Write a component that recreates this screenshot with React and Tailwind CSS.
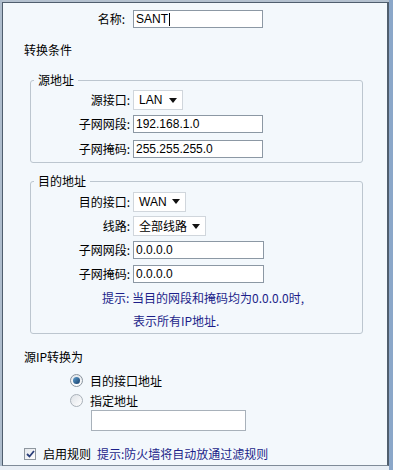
const cjk = { fontFamily: '"Noto Sans CJK SC", "Liberation Sans", sans-serif' };
const latin = { fontFamily: '"Liberation Sans", "Noto Sans CJK SC", sans-serif' };

function TextBox({ value, width, caret }) {
  return (
    <div
      className="ml-[3px] h-[18px] border border-[#8c98a4] bg-white flex items-center pl-[2px] text-[12px] text-black"
      style={{ ...latin, width }}
    >
      {value}
      {caret && <span className="ml-[1px] inline-block w-px h-[13px] bg-black" />}
    </div>
  );
}

function Select({ value, width, cn }) {
  return (
    <div
      className="ml-[3px] h-[20px] border border-[#d0d6dc] bg-white flex items-center justify-between pl-[5px] pr-[5px] text-[12px] text-black"
      style={{ width, ...(cn ? cjk : latin) }}
    >
      <span>{value}</span>
      <svg width="8" height="5" viewBox="0 0 8 5">
        <polygon points="0,0 8,0 4,5" fill="#111" />
      </svg>
    </div>
  );
}

function Row({ label, h, children }) {
  return (
    <div className="flex items-center" style={{ height: h }}>
      <div className="w-[99px] text-right text-[12px] text-black" style={cjk}>
        {label}
      </div>
      {children}
    </div>
  );
}

function Group({ title, children, className }) {
  return (
    <fieldset className={"ml-[27px] w-[333px] border border-[#bcc6cf] rounded-[3px] pb-[1px] " + className}>
      <legend className="ml-[3px] px-[4px] text-[12px] leading-[16px] text-black" style={cjk}>
        {title}
      </legend>
      {children}
    </fieldset>
  );
}

export default function App() {
  return (
    <div className="w-[393px] h-[470px] flex bg-[#e8eef5]">
      <div className="w-[2px] h-[466px] bg-[#aebdcd]" />
      <div className="flex flex-col">
        <div className="h-[2px] bg-[#b4c1cf]" />
        <div className="w-[387px] h-[464px] border-l border-t border-r-2 border-[#4f5e6e] border-b border-b-[#7f8b98] bg-[#f3f8fc] flex flex-col">
          <div className="mt-[7px] h-[18px] flex items-center">
            <div className="w-[122px] text-right text-[12px] text-black" style={cjk}>
              名称:
            </div>
            <div className="ml-[5px]">
              <TextBox value="SANT" width={130} caret />
            </div>
          </div>

          <div className="mt-[14px] h-[16px] leading-[16px] pl-[21px] text-[12px] text-black" style={cjk}>
            转换条件
          </div>

          <Group title="源地址" className="mt-[14px]">
            <Row label="源接口:" h={24}>
              <Select value="LAN" width={50} />
            </Row>
            <Row label="子网网段:" h={24}>
              <TextBox value="192.168.1.0" width={130} />
            </Row>
            <Row label="子网掩码:" h={25}>
              <TextBox value="255.255.255.0" width={130} />
            </Row>
          </Group>

          <Group title="目的地址" className="mt-[10px]">
            <Row label="目的接口:" h={25}>
              <Select value="WAN" width={53} />
            </Row>
            <Row label="线路:" h={24}>
              <Select value="全部线路" width={73} cn />
            </Row>
            <Row label="子网网段:" h={23}>
              <TextBox value="0.0.0.0" width={131} />
            </Row>
            <Row label="子网掩码:" h={25}>
              <TextBox value="0.0.0.0" width={131} />
            </Row>
            <div className="h-[24px] flex items-center pl-[71px] text-[12px] text-[#1c1f8a]" style={cjk}>
              提示: 当目的网段和掩码均为0.0.0.0时,
            </div>
            <div className="h-[22px] flex items-center pl-[102px] text-[12px] text-[#1c1f8a]" style={cjk}>
              表示所有IP地址.
            </div>
          </Group>

          <div className="mt-[15px] h-[16px] leading-[16px] pl-[21px] text-[12px] text-black" style={cjk}>
            源IP转换为
          </div>

          <div className="mt-[5px] h-[21px] flex items-center pl-[67px]">
            <span className="w-[13px] h-[13px] rounded-full border border-[#8a949e] bg-gradient-to-b from-[#e4e8ec] to-[#ffffff] flex items-center justify-center">
              <span className="w-[7px] h-[7px] rounded-full bg-gradient-to-br from-[#5ea0d0] to-[#163e6a]" />
            </span>
            <span className="ml-[7px] text-[12px] text-black" style={cjk}>
              目的接口地址
            </span>
          </div>
          <div className="h-[19px] flex items-center pl-[67px]">
            <span className="w-[13px] h-[13px] rounded-full border border-[#a9b1b9] bg-gradient-to-br from-[#dde2e7] to-[#ffffff]" />
            <span className="ml-[7px] text-[12px] text-black" style={cjk}>
              指定地址
            </span>
          </div>
          <div className="ml-[88px] w-[155px] h-[21px] border border-[#a8b1ba] bg-white" />

          <div className="mt-[13px] h-[20px] flex items-center pl-[21px]">
            <span className="w-[12px] h-[12px] border border-[#8e979f] bg-gradient-to-br from-[#e3e7eb] to-[#ffffff] flex items-center justify-center">
              <svg width="9" height="8" viewBox="0 0 9 8">
                <path d="M1 4 L3.5 6.5 L8 1" stroke="#2a3f7a" strokeWidth="1.8" fill="none" />
              </svg>
            </span>
            <span className="ml-[7px] text-[12px] text-black" style={cjk}>
              启用规则
            </span>
            <span className="ml-[6px] text-[12px] text-[#1c1f8a]" style={cjk}>
              提示:防火墙将自动放通过滤规则
            </span>
          </div>
        </div>
      </div>
      <div className="w-[4px] h-[470px] bg-[#8ba7c9]" />
    </div>
  );
}
